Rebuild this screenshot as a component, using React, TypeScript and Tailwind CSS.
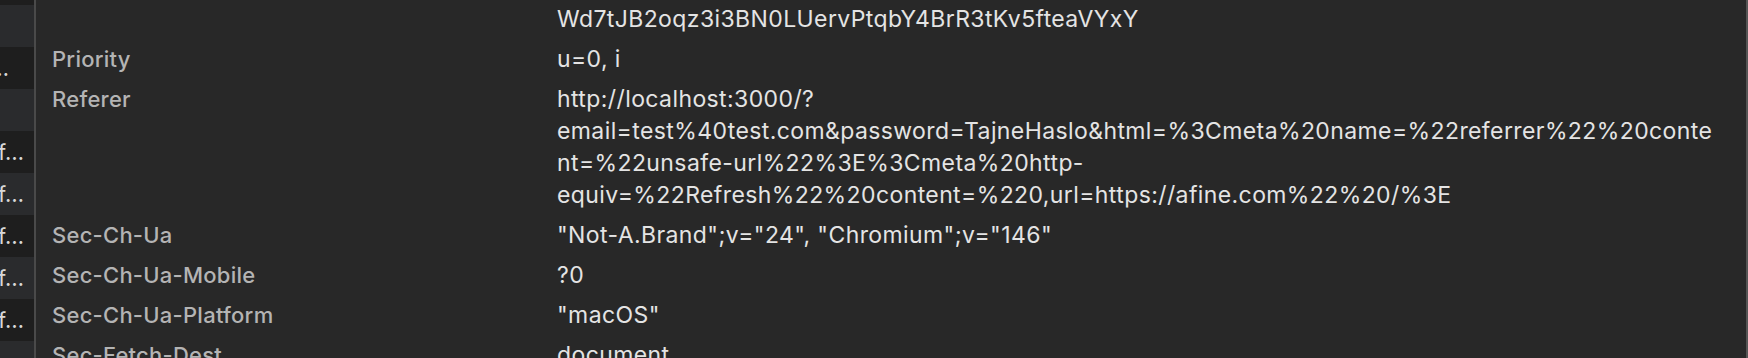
import React from "react";

const font = { fontFamily: "Inter, 'Noto Sans', sans-serif" };

type Row = { k: string; v: string[] };

const rows: Row[] = [
  { k: "Priority", v: ["u=0, i"] },
  {
    k: "Referer",
    v: [
      "http://localhost:3000/?",
      "email=test%40test.com&password=TajneHaslo&html=%3Cmeta%20name=%22referrer%22%20conte",
      "nt=%22unsafe-url%22%3E%3Cmeta%20http-",
      "equiv=%22Refresh%22%20content=%220,url=https://afine.com%22%20/%3E",
    ],
  },
  { k: "Sec-Ch-Ua", v: ['"Not-A.Brand";v="24", "Chromium";v="146"'] },
  { k: "Sec-Ch-Ua-Mobile", v: ["?0"] },
  { k: "Sec-Ch-Ua-Platform", v: ['"macOS"'] },
  { k: "Sec-Fetch-Dest", v: ["document"] },
];

export default function App() {
  const light = "bg-[#2a2b2d]";
  const dark = "bg-[#1e1e1e]";
  const cell = "flex h-[42px] shrink-0 items-center justify-end overflow-hidden whitespace-nowrap text-[#d8d8d8]";
  return (
    <div
      className="flex h-[358px] w-[1748px] overflow-hidden bg-[#282828] leading-[32px]"
      style={font}
    >
      <div className="flex w-[34px] shrink-0 flex-col overflow-hidden bg-[#1e1e1e] text-[22px]">
        <div className="h-[5px] shrink-0 bg-[#1e1e1e]" />
        <div className={`${cell} ${light}`} />
        <div className={`${cell} ${dark} pr-[25px]`}>
          <span>…</span>
        </div>
        <div className={`${cell} ${light}`} />
        <div className={`${cell} ${dark} pr-[10px]`}>
          <span>f…</span>
        </div>
        <div className={`${cell} ${light} pr-[10px]`}>
          <span>f…</span>
        </div>
        <div className={`${cell} ${dark} pr-[10px]`}>
          <span>f…</span>
        </div>
        <div className={`${cell} ${light} pr-[10px]`}>
          <span>f…</span>
        </div>
        <div className={`${cell} ${dark} pr-[10px]`}>
          <span>f…</span>
        </div>
        <div className={`${cell} ${light} pr-[31px]`}>
          <span>…</span>
        </div>
      </div>
      <div className="w-[2px] shrink-0 bg-[#4a4a4a]" />
      <div className="flex min-w-0 flex-1 flex-col pl-[16px]">
        <div className="flex pt-[3px] pb-[4px]">
          <div className="w-[505px] shrink-0" />
          <div className="whitespace-nowrap text-[23px] tracking-[0.4px] text-[#e4e4e4]">
            Wd7tJB2oqz3i3BN0LUervPtqbY4BrR3tKv5fteaVYxY
          </div>
        </div>
        {rows.map((r) => (
          <div key={r.k} className="flex py-[4px]">
            <div className="w-[505px] shrink-0 text-[22px] font-medium tracking-[0.25px] text-[#b4b4b4]">
              {r.k}
            </div>
            <div className="flex flex-col text-[23px] tracking-[0.4px] text-[#e4e4e4]">
              {r.v.map((l, i) => (
                <div key={i} className="whitespace-nowrap">
                  {l}
                </div>
              ))}
            </div>
          </div>
        ))}
      </div>
      <div className="w-[2px] shrink-0 bg-[#555555]" />
    </div>
  );
}
